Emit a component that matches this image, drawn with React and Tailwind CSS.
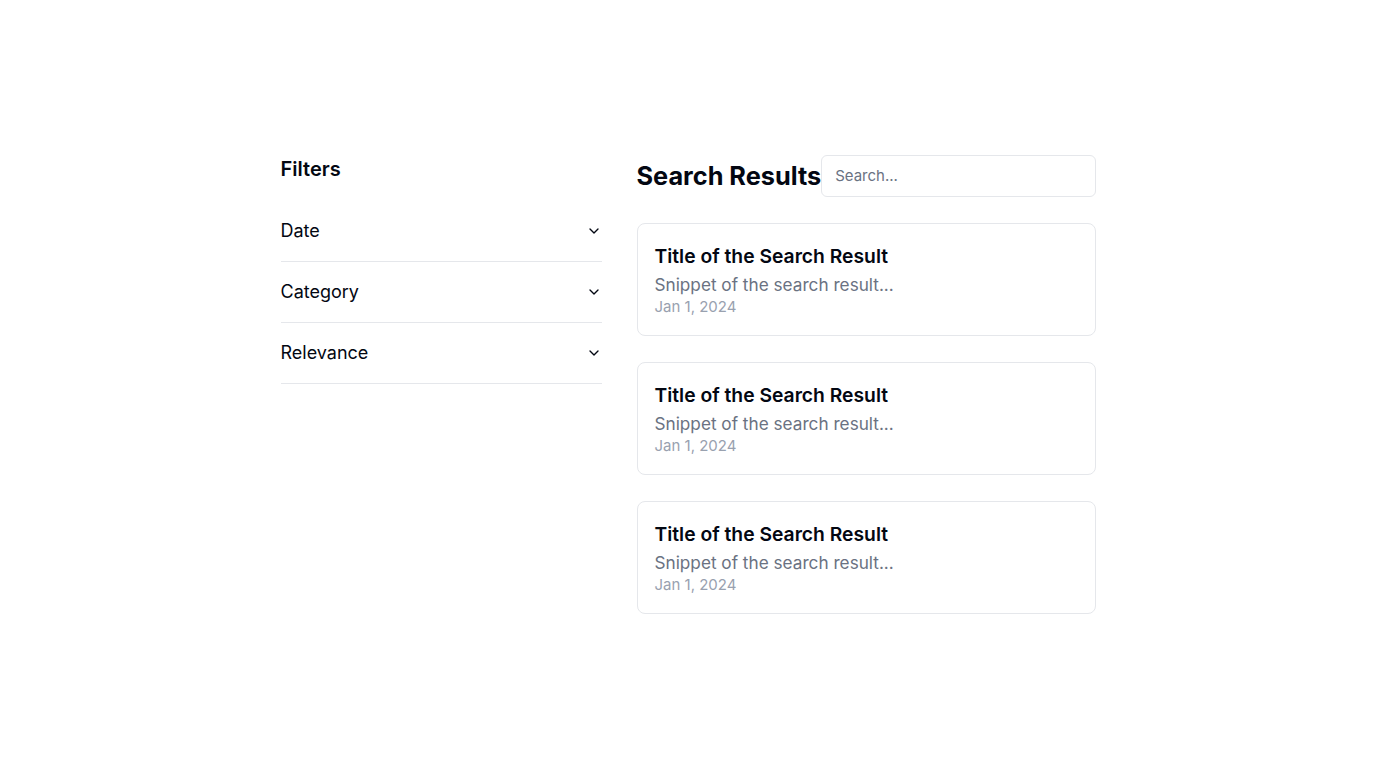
import React from "react";
import { ChevronDown } from "lucide-react";

const filters = ["Date", "Category", "Relevance"];

function ResultCard() {
  return (
    <div className="rounded-lg border border-gray-200 bg-white px-[17px] py-[18px]">
      <h3 className="text-[19.3px] font-semibold leading-7 text-gray-950">Title of the Search Result</h3>
      <p className="mt-[3px] text-[17.2px] leading-6 text-gray-500">Snippet of the search result...</p>
      <p className="text-[15px] leading-5 text-gray-400">Jan 1, 2024</p>
    </div>
  );
}

export default function App() {
  return (
    <div
      className="flex min-h-screen items-center justify-center bg-white text-gray-950"
      style={{ fontFamily: "Inter, 'Noto Sans', sans-serif" }}
    >
      <div className="flex w-[815px] items-start gap-[35px]">
        <aside className="w-[321px] shrink-0">
          <h2 className="mb-[18px] text-xl font-semibold leading-7">Filters</h2>
          <div>
            {filters.map((f) => (
              <div
                key={f}
                className="flex items-center justify-between border-b border-gray-200 py-4"
              >
                <span className="text-lg font-normal leading-7">{f}</span>
                <ChevronDown className="h-4 w-4" strokeWidth={2} />
              </div>
            ))}
          </div>
        </aside>
        <main className="min-w-0 flex-1">
          <div className="mb-[26px] flex items-center">
            <h1 className="shrink-0 text-[25.3px] font-bold leading-8">Search Results</h1>
            <input
              type="text"
              placeholder="Search..."
              className="min-w-0 flex-1 rounded-md border border-gray-200 px-[13px] py-2.5 text-[15px] leading-5 outline-none placeholder:text-gray-500"
            />
          </div>
          <div className="flex flex-col gap-[26px]">
            <ResultCard />
            <ResultCard />
            <ResultCard />
          </div>
        </main>
      </div>
    </div>
  );
}
